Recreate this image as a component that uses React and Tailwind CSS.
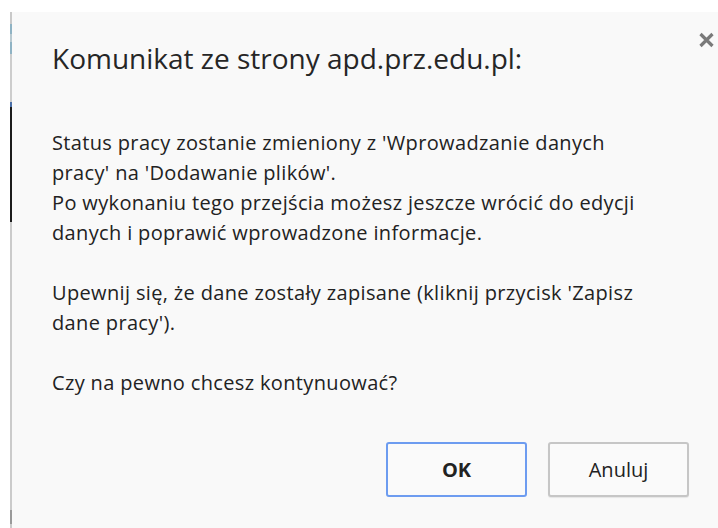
const lines = [
  "Status pracy zostanie zmieniony z 'Wprowadzanie danych",
  "pracy' na 'Dodawanie plików'.",
  "Po wykonaniu tego przejścia możesz jeszcze wrócić do edycji",
  "danych i poprawić wprowadzone informacje.",
  "",
  "Upewnij się, że dane zostały zapisane (kliknij przycisk 'Zapisz",
  "dane pracy').",
  "",
  "Czy na pewno chcesz kontynuować?",
];

// page content peeking out behind the dialog's left edge
const EdgeStrip = () => (
  <div className="flex w-[2px] flex-col">
    <div className="h-[12px] bg-[#c9c9c9]" />
    <div className="h-[10px] bg-[#8fb3c4]" />
    <div className="h-[8px] bg-[#b9c9d0]" />
    <div className="h-[12px] bg-[#8fb3c4]" />
    <div className="h-[48px] bg-[#cdcdcd]" />
    <div className="h-[5px] bg-[#4a6fa8]" />
    <div className="h-[115px] bg-[#1c1c1c]" />
    <div className="h-[288px] bg-[#cbcbcb]" />
    <div className="h-[14px] bg-[#9a9a9a]" />
    <div className="flex-1 bg-[#cbcbcb]" />
  </div>
);

const CloseIcon = () => (
  <svg width="17" height="16" viewBox="0 0 17 16" className="shrink-0">
    <path d="M2.5 2 L14.5 14 M14.5 2 L2.5 14" stroke="#7a7a7a" strokeWidth="3.2" />
  </svg>
);

export default function App() {
  return (
    <div
      className="flex h-[528px] w-[718px] flex-col overflow-hidden bg-white text-[#222]"
      style={{ fontFamily: "'Open Sans', 'Noto Sans', 'Liberation Sans', sans-serif" }}
    >
      <div className="h-[12px] shrink-0" />
      <div className="flex flex-1 pl-[10px]">
        <EdgeStrip />
        <div className="flex flex-1 flex-col bg-[#f9f9f9] pt-[20px]">
          <div className="flex items-start justify-between pl-[40px] pr-[3px]">
            <h1 className="mt-[8px] text-[28px] leading-[36px] text-[#262626]">
              Komunikat ze strony apd.prz.edu.pl:
            </h1>
            <CloseIcon />
          </div>

          <div className="mt-[52px] pl-[40px] text-[20px] leading-[30px] tracking-[0.35px]">
            {lines.map((line, i) => (
              <div key={i} className="h-[30px] whitespace-nowrap">
                {line}
              </div>
            ))}
          </div>

          <div className="mt-[44px] flex justify-end gap-[21px] pr-[29px]">
            <button className="h-[55px] w-[141px] rounded-[3px] border-2 border-[#6d9cf0] bg-[#fafafa] text-[20px] font-bold">
              OK
            </button>
            <button className="h-[55px] w-[141px] rounded-[3px] border-2 border-[#c6c6c6] bg-[#fafafa] text-[20px] shadow-[0_1px_1px_rgba(0,0,0,0.08)]">
              Anuluj
            </button>
          </div>
        </div>
      </div>
    </div>
  );
}
